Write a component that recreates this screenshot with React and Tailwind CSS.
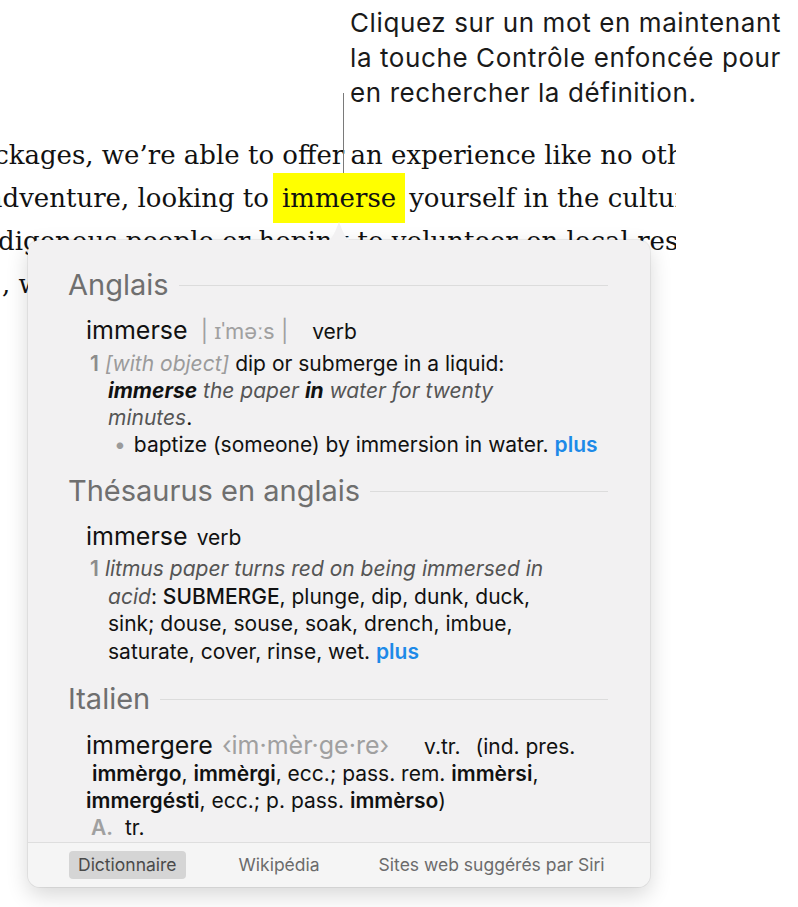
import React from "react";

const sans = { fontFamily: "Inter, 'Noto Sans', sans-serif" };

function SectionTitle({ children }) {
  return (
    <div className="flex items-center gap-[10px] text-[29px] leading-[34px] text-[#6f6f6f]">
      <span>{children}</span>
      <div className="h-px flex-1 bg-[#dcdcdc]" />
    </div>
  );
}

function Plus() {
  return <span className="font-semibold text-[#1d8ae8]">plus</span>;
}

function Num({ children }) {
  return <span className="mr-[6px] font-semibold text-[#8c8c8c]">{children}</span>;
}

export default function App() {
  return (
    <div
      className="relative h-[907px] w-[798px] overflow-hidden bg-white"
      style={sans}
    >
      {/* callout */}
      <div className="pl-[350px] pt-[5px] text-[26px] leading-[35px] tracking-[0.6px] text-[#1a1a1a]">
        <div>Cliquez sur un mot en maintenant</div>
        <div>la touche Contrôle enfoncée pour</div>
        <div>en rechercher la définition.</div>
      </div>
      <div className="absolute left-[343px] top-[93px] h-[80px] w-px bg-[#7a7a7a]" />

      {/* article text behind the popup */}
      <div
        className="mt-[24px] w-[676px] overflow-hidden text-[26px] leading-[43px] text-[#111]"
        style={{ fontFamily: "'DejaVu Serif', serif" }}
      >
        <div className="ml-[-38px] whitespace-nowrap">
          packages, we’re able to offer <span className="ml-[-2px]">an experience like no other in the region</span>
        </div>
        <div className="ml-[-13px] whitespace-nowrap">
          adventure, looking to
          <span className="-my-[4px] mx-[4px] inline-block h-[50px] bg-[#ffff00] px-[9px] leading-[50px]">
            immerse
          </span>
          yourself in the culture of the
        </div>
        <div className="ml-[-27px] whitespace-nowrap">
          indigenous people or hoping to volunteer on local reserves
        </div>
        <div className="ml-[2px] whitespace-nowrap">, we have the right trip for you</div>
      </div>

      {/* dictionary popup */}
      <div className="absolute left-[28px] top-[240px] flex h-[647px] w-[622px] flex-col rounded-[12px] bg-[#f2f1f2] shadow-[0_8px_22px_rgba(0,0,0,0.16),0_0_0_1px_rgba(0,0,0,0.06)]">
        <svg
          className="absolute left-[297px] top-[-19px]"
          width="28"
          height="20"
          viewBox="0 0 28 20"
        >
          <path d="M0 20 C6 20 9 14 14 1 C19 14 22 20 28 20 Z" fill="#f2f1f2" />
        </svg>

        <div className="flex-1 overflow-hidden pl-[40px] pr-[42px] pt-[28px]">
          <SectionTitle>Anglais</SectionTitle>
          <div className="pl-[18px] pt-[11px]">
            <div className="text-[25px] leading-[34px] text-[#111]">
              immerse
              <span className="ml-[13px] text-[22px] text-[#a0a0a0]">| ɪˈməːs |</span>
              <span className="ml-[24px] text-[21px] text-[#111]">verb</span>
            </div>
            <div className="pl-[22px] pt-[1px] text-[21px] leading-[27px] text-[#111]">
              <div className="-ml-[18px]">
                <Num>1</Num>
                <span className="italic text-[#9b9b9b]">[with object]</span> dip or submerge in a liquid:
              </div>
              <div className="italic text-[#555]">
                <b className="text-[#111]">immerse</b> the paper <b className="text-[#111]">in</b> water for twenty
              </div>
              <div className="italic text-[#555]">
                minutes<span className="not-italic text-[#111]">.</span>
              </div>
              <div className="pl-[6px]">
                <span className="mr-[8px] text-[#9b9b9b]">•</span>baptize (someone) by immersion in water.{" "}
                <Plus />
              </div>
            </div>
          </div>

          <div className="pt-[16px]">
            <SectionTitle>Thésaurus en anglais</SectionTitle>
          </div>
          <div className="pl-[18px] pt-[11px]">
            <div className="text-[25px] leading-[34px] text-[#111]">
              immerse <span className="ml-[2px] text-[21px]">verb</span>
            </div>
            <div className="pl-[22px] pt-[0px] text-[21px] leading-[27.5px] text-[#111]">
              <div className="-ml-[18px]">
                <Num>1</Num>
                <span className="italic text-[#555]">litmus paper turns red on being immersed in</span>
              </div>
              <div>
                <span className="italic text-[#555]">acid</span>: <span className="font-medium">SUBMERGE</span>, plunge, dip, dunk, duck,
              </div>
              <div>sink; douse, souse, soak, drench, imbue,</div>
              <div>
                saturate, cover, rinse, wet. <Plus />
              </div>
            </div>
          </div>

          <div className="pt-[17px]">
            <SectionTitle>Italien</SectionTitle>
          </div>
          <div className="whitespace-nowrap pl-[18px] pt-[16px] text-[21px] leading-[27px] text-[#111]">
            <div>
              <span className="text-[25px]">immergere</span>
              <span className="ml-[9px] text-[25px] text-[#a0a0a0]">‹im·mèr·ge·re›</span>
              <span className="ml-[35px]">v.tr.</span>
              <span className="ml-[15px]">(ind. pres.</span>
            </div>
            <div>
              &nbsp;<b className="font-semibold">immèrgo</b>, <b className="font-semibold">immèrgi</b>, ecc.; pass. rem.{" "}
              <b className="font-semibold">immèrsi</b>,
            </div>
            <div>
              <b className="font-semibold">immergésti</b>, ecc.; p. pass. <b className="font-semibold">immèrso</b>)
            </div>
            <div className="pl-[5px]">
              <span className="mr-[12px] font-semibold text-[#a0a0a0]">A.</span>tr.
            </div>
          </div>
        </div>

        <div className="flex h-[45px] items-center rounded-b-[12px] border-t border-[#dedede] bg-[#f5f5f5] pl-[41px] text-[17.5px] text-[#6b6b6b]">
          <span className="rounded-[4px] bg-[#d5d5d5] px-[9px] py-[1px] text-[#4a4a4a]">Dictionnaire</span>
          <span className="ml-[53px]">Wikipédia</span>
          <span className="ml-[59px]">Sites web suggérés par Siri</span>
        </div>
      </div>
    </div>
  );
}
